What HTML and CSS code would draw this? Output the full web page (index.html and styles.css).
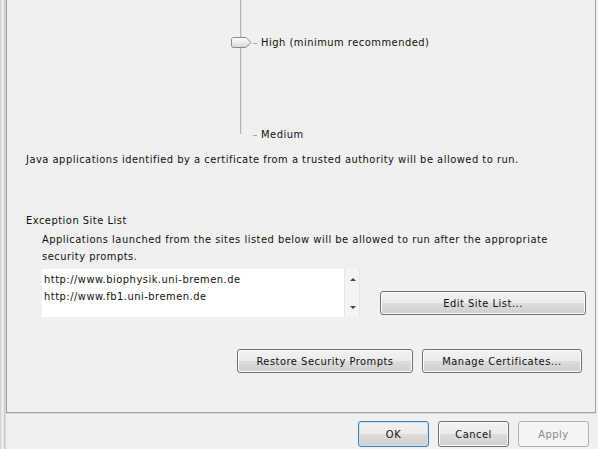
FILE: index.html
```html
<!DOCTYPE html>
<html>
<head>
<meta charset="utf-8">
<link rel="stylesheet" href="styles.css">
</head>
<body>
<div class="window">
  <div class="frame-left"></div>
  <div class="main">
    <div class="panel">
      <div class="slider">
        <div class="track-col">
          <svg class="thumb" width="21" height="11" viewBox="0 0 21 11">
            <defs>
              <linearGradient id="tg" x1="0" y1="0" x2="0" y2="1">
                <stop offset="0" stop-color="#fdfdfd"/>
                <stop offset="0.5" stop-color="#ececec"/>
                <stop offset="1" stop-color="#d6d6d6"/>
              </linearGradient>
            </defs>
            <path d="M2.5 0.5 H15 L20 5.5 L15 10.5 H2.5 Q0.5 10.5 0.5 8.5 V2.5 Q0.5 0.5 2.5 0.5 Z" fill="url(#tg)" stroke="#8a8a8a"/>
          </svg>
        </div>
        <div class="labels">
          <div class="level"><span class="tick"></span><span>High (minimum recommended)</span></div>
          <div class="level level-low"><span class="tick"></span><span>Medium</span></div>
        </div>
      </div>
      <p class="desc">Java applications identified by a certificate from a trusted authority will be allowed to run.</p>
      <h3 class="section-title">Exception Site List</h3>
      <p class="section-text">Applications launched from the sites listed below will be allowed to run after the appropriate<br>security prompts.</p>
      <div class="site-row">
        <div class="listbox">
          <div class="list-items">
            <div>http://www.biophysik.uni-bremen.de</div>
            <div>http://www.fb1.uni-bremen.de</div>
          </div>
          <div class="scroll">
            <span class="arrow-up"></span>
            <span class="arrow-down"></span>
          </div>
        </div>
        <button class="btn btn-edit">Edit Site List...</button>
      </div>
      <div class="action-row">
        <button class="btn btn-restore">Restore Security Prompts</button>
        <button class="btn btn-manage">Manage Certificates...</button>
      </div>
    </div>
    <div class="dialog-buttons">
      <button class="btn btn-dlg btn-default">OK</button>
      <button class="btn btn-dlg">Cancel</button>
      <button class="btn btn-dlg btn-disabled">Apply</button>
    </div>
  </div>
</div>
</body>
</html>
```

FILE: styles.css
```css
html, body {
  margin: 0;
  padding: 0;
}
body {
  width: 598px;
  height: 449px;
  overflow: hidden;
  background: #f0f0f0;
  font-family: "DejaVu Sans Condensed", "DejaVu Sans", sans-serif;
  font-stretch: condensed;
  font-size: 11px;
  letter-spacing: 0.5px;
  color: #111;
}
.window {
  display: flex;
  height: 449px;
}
.frame-left {
  width: 6px;
  flex: none;
  background: linear-gradient(to right,
    #d4d4d4 0, #d4d4d4 1px,
    #e4e4e4 1px, #e4e4e4 2px,
    #f2f2f2 2px, #f2f2f2 3px,
    #e6e6e6 3px, #e6e6e6 4px,
    #cdcdcd 4px, #cdcdcd 5px,
    #dadada 5px, #dadada 6px);
}
.main {
  width: 592px;
  flex: none;
  display: flex;
  flex-direction: column;
}
.panel {
  height: 412px;
  margin-right: 2px;
  border-left: 1px solid #a0a0a0;
  border-right: 1px solid #a0a0a0;
  border-bottom: 1px solid #a0a0a0;
  box-shadow: 0 1px 0 #dadada;
  padding-left: 19px;
  padding-right: 8px;
  display: flex;
  flex-direction: column;
  align-items: flex-start;
}
.slider {
  display: flex;
  align-items: flex-start;
  margin-left: 205px;
  height: 141px;
}
.track-col {
  position: relative;
  width: 20px;
  height: 134px;
  background: linear-gradient(to right, transparent 9px, #b4b4b4 9px, #b4b4b4 10px, #e2e2e2 10px, #e2e2e2 11px, transparent 11px);
}
.thumb {
  position: absolute;
  left: 0;
  top: 37px;
  display: block;
}
.labels {
  display: flex;
  flex-direction: column;
  padding-top: 35px;
  gap: 76px;
}
.level {
  display: flex;
  align-items: center;
  height: 16px;
  line-height: 16px;
  white-space: nowrap;
}
.tick {
  width: 4px;
  height: 1px;
  background: #a8a8a8;
  margin-left: 2px;
  margin-right: 4px;
}
.desc {
  margin: 11px 0 0 0;
  line-height: 16px;
  white-space: nowrap;
}
.section-title {
  margin: 45px 0 0 0;
  font-size: 11px;
  font-weight: normal;
  line-height: 16px;
}
.section-text {
  margin: 2px 0 0 16px;
  line-height: 17px;
  white-space: nowrap;
}
.site-row {
  display: flex;
  align-items: flex-end;
  margin: 4px 0 0 16px;
  gap: 18px;
}
.listbox {
  display: flex;
  width: 320px;
  height: 48px;
}
.list-items {
  width: 300px;
  background: #fff;
  padding: 2px 0 0 2px;
  line-height: 17px;
  white-space: nowrap;
}
.scroll {
  width: 16px;
  background: #f4f4f4;
  border-left: 1px solid #e6e6e6;
  border-right: 1px solid #e6e6e6;
  display: flex;
  flex-direction: column;
  align-items: center;
  justify-content: space-between;
  padding: 9px 0 8px 0;
  box-sizing: border-box;
}
.arrow-up {
  width: 0;
  height: 0;
  border-left: 3px solid transparent;
  border-right: 3px solid transparent;
  border-bottom: 3px solid #444;
  margin-left: 1px;
}
.arrow-down {
  width: 0;
  height: 0;
  border-left: 3px solid transparent;
  border-right: 3px solid transparent;
  border-top: 3px solid #444;
  margin-left: 1px;
}
.btn {
  font-family: "DejaVu Sans Condensed", "DejaVu Sans", sans-serif;
  font-stretch: condensed;
  font-size: 11px;
  letter-spacing: 0.5px;
  color: #111;
  height: 24px;
  padding: 0;
  border: 1px solid #707070;
  border-radius: 3px;
  background: linear-gradient(#f2f2f2 0%, #ebebeb 50%, #dddddd 50%, #cfcfcf 100%);
  box-shadow: inset 0 0 0 1px #fbfbfb;
  text-align: center;
}
.btn-edit {
  width: 206px;
  margin-bottom: 2px;
}
.action-row {
  display: flex;
  align-self: flex-end;
  gap: 9px;
  margin: 32px 5px 0 0;
}
.btn-restore {
  width: 176px;
}
.btn-manage {
  width: 160px;
}
.dialog-buttons {
  display: flex;
  justify-content: flex-end;
  gap: 9px;
  padding: 8px 9px 0 0;
}
.btn-dlg {
  width: 71px;
  height: 26px;
}
.btn-default {
  border-color: #3c7fb1;
  box-shadow: inset 0 0 0 1px #bfe6f8;
}
.btn-disabled {
  border-color: #adb2b5;
  background: #f4f4f4;
  box-shadow: none;
  color: #8a8a8a;
}
```
